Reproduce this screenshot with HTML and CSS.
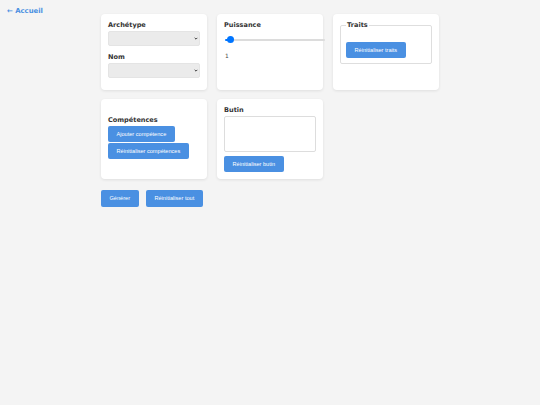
FILE: index.html
```html
<!DOCTYPE html>
<html lang="fr">
<head>
<meta charset="utf-8">
<title>Générateur</title>
<link rel="stylesheet" href="styles.css">
</head>
<body>
<nav class="topnav"><a href="#" class="back-link">← Accueil</a></nav>
<main class="container">
  <div class="grid">
    <section class="card">
      <label class="card-title" for="archetype">Archétype</label>
      <div class="select-wrap">
        <select id="archetype" class="select"></select>
        <svg class="chev" viewBox="0 0 6 4" width="4" height="3"><path d="M1 1 L3 3 L5 1" fill="none" stroke="#333" stroke-width="1.4"/></svg>
      </div>
      <label class="card-title label-gap" for="nom">Nom</label>
      <div class="select-wrap last">
        <select id="nom" class="select"></select>
        <svg class="chev" viewBox="0 0 6 4" width="4" height="3"><path d="M1 1 L3 3 L5 1" fill="none" stroke="#333" stroke-width="1.4"/></svg>
      </div>
    </section>
    <section class="card">
      <label class="card-title" for="puissance">Puissance</label>
      <input id="puissance" class="range" type="range" min="0" max="40" value="1">
      <div class="range-value">1</div>
    </section>
    <section class="card">
      <fieldset class="traits">
        <legend class="card-title legend">Traits</legend>
        <div class="trait-list"></div>
        <button class="btn">Réinitialiser traits</button>
      </fieldset>
    </section>
    <section class="card">
      <div class="skill-list"></div>
      <h3 class="card-title">Compétences</h3>
      <div class="stack">
        <button class="btn">Ajouter compétence</button>
        <button class="btn">Réinitialiser compétences</button>
      </div>
    </section>
    <section class="card">
      <label class="card-title" for="butin">Butin</label>
      <textarea id="butin" class="textarea"></textarea>
      <button class="btn btn-loot">Réinitialiser butin</button>
    </section>
  </div>
  <div class="actions">
    <button class="btn btn-lg">Générer</button>
    <button class="btn btn-lg">Réinitialiser tout</button>
  </div>
</main>
</body>
</html>
```
FILE: styles.css
```css
* { box-sizing: border-box; }
html, body { margin: 0; padding: 0; }
body {
  background: #f4f4f4;
  font-family: "DejaVu Sans", sans-serif;
  font-size: 5.6px;
  color: #333;
}
.topnav {
  padding: 7px 7px 0;
  height: 14px;
}
.back-link {
  color: #4a90e2;
  text-decoration: none;
  font-weight: bold;
  font-size: 6.9px;
  line-height: 8px;
  display: inline-block;
}
.container {
  width: 338px;
  margin: 0 auto;
}
.grid {
  display: grid;
  grid-template-columns: repeat(3, 1fr);
  column-gap: 10px;
  row-gap: 9px;
}
.card {
  background: #fff;
  border-radius: 4px;
  box-shadow: 0 1px 3px rgba(0,0,0,0.09);
  padding: 7px 7px 7px;
  min-width: 0;
}
.card-title {
  display: block;
  margin: 0;
  font-size: 6.55px;
  line-height: 8px;
  font-weight: bold;
  color: #333;
}
.label-gap { margin-top: 6.8px; }
.select-wrap {
  position: relative;
  margin-top: 2px;
}
.select-wrap.last { margin-bottom: 5px; }
.select {
  -webkit-appearance: none;
  appearance: none;
  display: block;
  width: 100%;
  height: 15px;
  border: 1px solid #e4e4e4;
  border-radius: 2px;
  background: #ebebeb;
  margin: 0;
  font-size: 5.6px;
}
.chev {
  position: absolute;
  right: 2px;
  top: 6px;
}
.range {
  -webkit-appearance: none;
  appearance: none;
  display: block;
  width: 100px;
  height: 7px;
  margin: 7px 0 0 1px;
  padding: 0;
  background: transparent;
}
.range::-webkit-slider-runnable-track {
  height: 2px;
  border-radius: 1px;
  background: linear-gradient(to right, #0075ff 0 6px, #dcdcdc 6px);
}
.range::-webkit-slider-thumb {
  -webkit-appearance: none;
  width: 7px;
  height: 7px;
  border-radius: 50%;
  background: #0075ff;
  margin-top: -2.5px;
  border: none;
}
.range-value {
  margin-top: 10px;
  padding-left: 1px;
  font-size: 5.9px;
  line-height: 7px;
  color: #444;
}
.traits {
  margin: 0;
  border: 1px solid #dedede;
  border-radius: 2px;
  padding: 0 5px 4.6px;
  min-width: 0;
}
.legend {
  padding: 0 1px;
}
.trait-list { height: 13px; }
.btn {
  display: inline-block;
  font-family: "Liberation Sans", Arial, sans-serif;
  font-size: 5.6px;
  line-height: 6.4px;
  padding: 4.8px 8.5px;
  background: #4a90e2;
  color: #fff;
  border: none;
  border-radius: 2px;
  margin: 0;
  cursor: pointer;
}
.skill-list { height: 9.8px; }
.stack {
  display: flex;
  flex-direction: column;
  align-items: flex-start;
  margin-top: 2.9px;
  row-gap: 0.6px;
}
.textarea {
  display: block;
  width: 92px;
  height: 35.4px;
  margin: 2.5px 0 0;
  border: 1px solid #ddd;
  border-radius: 2px;
  resize: none;
  background: #fff;
}
.btn-loot { margin-top: 4.6px; }
.actions {
  display: flex;
  gap: 7.4px;
  margin-top: 10.3px;
}
.btn-lg { padding: 5.3px 8.5px; }
```
